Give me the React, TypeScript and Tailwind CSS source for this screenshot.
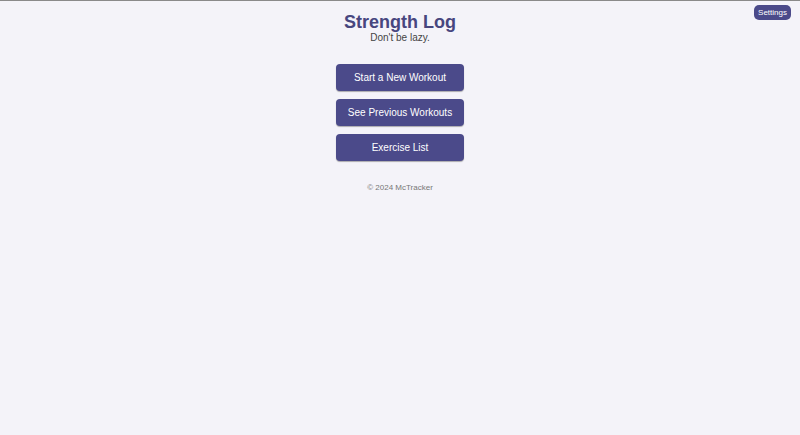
import React from 'react';

const buttons = ['Start a New Workout', 'See Previous Workouts', 'Exercise List'];

export default function App() {
    return (
        <div className="min-h-[435px] bg-[#f4f3f9] border-t border-[#8a8a8a] font-['Liberation_Sans',Arial,sans-serif] relative">
            <button className="absolute right-[9px] top-[4px] w-[37px] h-[15px] rounded-[5px] bg-[#4b4a8a] text-white text-[8px] leading-none">
                Settings
            </button>
            <header className="flex flex-col items-center pt-[11px]">
                <h1 className="text-[18px] leading-[20px] font-bold text-[#47467f]">Strength Log</h1>
                <p className="text-[10px] leading-[12px] text-[#444]">Don't be lazy.</p>
            </header>
            <div className="flex flex-col items-center gap-[8px] mt-[20px]">
                {buttons.map((label) => (
                    <button
                        key={label}
                        className="w-[128px] h-[27px] rounded-[4px] bg-[#4b4a8a] text-white text-[10px] shadow-[0_1px_1px_rgba(0,0,0,0.3)]"
                    >
                        {label}
                    </button>
                ))}
            </div>
            <footer className="text-center text-[8px] leading-[10px] text-[#777] mt-[22px]">© 2024 McTracker</footer>
        </div>
    );
}
